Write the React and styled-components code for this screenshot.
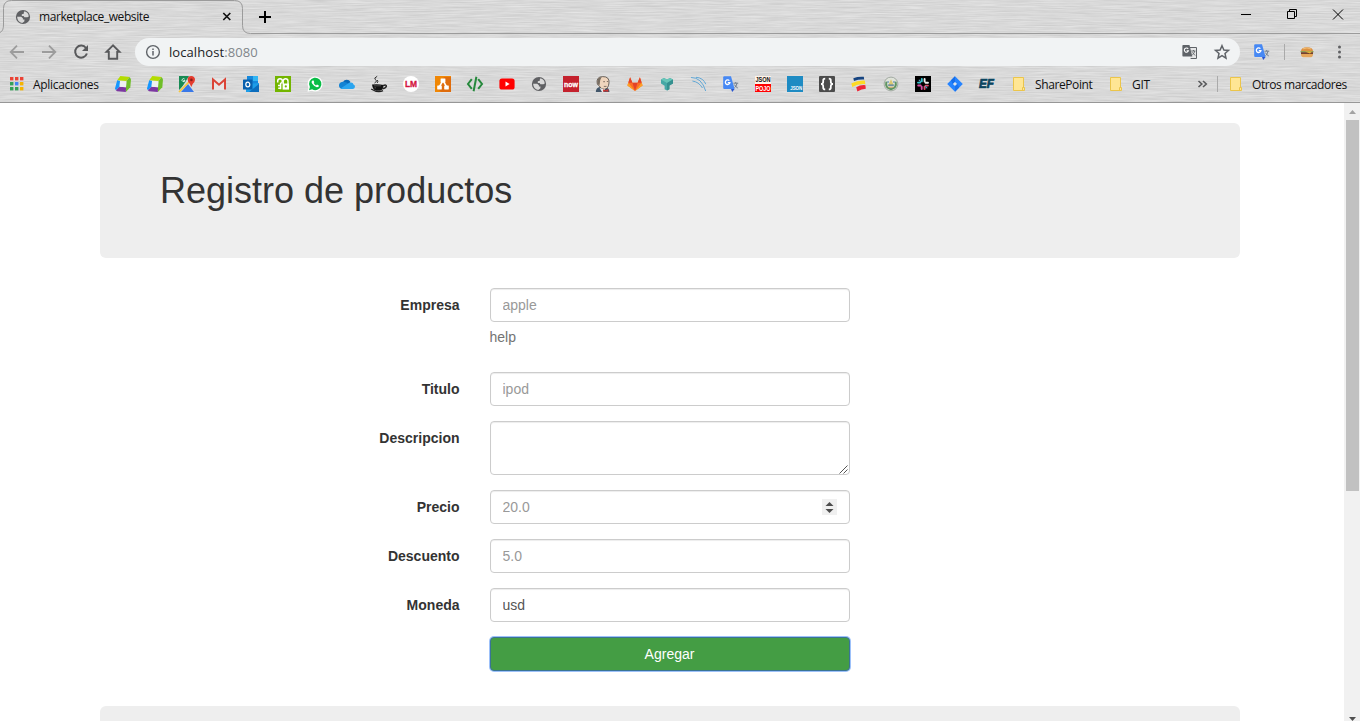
import React from "react";
import styled, { createGlobalStyle } from "styled-components";

const GlobalStyle = createGlobalStyle`
  *, *::before, *::after { box-sizing: border-box; }
  html, body { margin: 0; height: 721px; overflow: hidden; background: #fff; }
  svg { display: block; flex: none; overflow: visible; }
`;

const Window = styled.div`
  display: flex;
  flex-direction: column;
  width: 1360px;
  height: 721px;
  overflow: hidden;
`;

/* Browser chrome */

const Chrome = styled.header`
  position: relative;
  flex: none;
  height: 103px;
  border-bottom: 1px solid #979797;
  background: #d8d8d8;
  font-family: "Open Sans", "Noto Sans", sans-serif;
  font-size: 12px;
  color: #111;
  isolation: isolate;
`;

const Texture = styled.svg`
  position: absolute;
  inset: 0;
  z-index: -1;
`;

const TabOutline = styled.svg`
  position: absolute;
  left: 0;
  top: 0;
  z-index: -1;
`;

const TabStrip = styled.div`
  display: flex;
  align-items: center;
  height: 34px;
  padding: 0 16px 1px 15px;
`;

const TabTitle = styled.span`
  width: 182px;
  margin-left: 8px;
  white-space: nowrap;
  letter-spacing: -0.42px;
`;

const NewTab = styled.svg`
  margin-left: 27px;
`;

const WindowButtons = styled.div`
  display: flex;
  gap: 35px;
  margin-left: auto;
  margin-bottom: 5px;
`;

const Toolbar = styled.div`
  display: flex;
  align-items: center;
  height: 36px;
  padding: 0 11px 0 9px;
`;

const NavButtons = styled.div`
  display: flex;
  gap: 16px;
`;

const AddressBar = styled.div`
  display: flex;
  align-items: center;
  width: 1105px;
  height: 28px;
  margin-left: 14px;
  padding: 0 10px;
  border-radius: 14px;
  background: #f1f3f4;
`;

const Url = styled.span`
  flex: 1;
  margin-left: 8px;
  font-size: 13px;
  letter-spacing: 0.08px;
  color: #202124;
`;

const Port = styled.span`
  color: #80868b;
`;

const AddressActions = styled.div`
  display: flex;
  gap: 16px;
`;

const Extensions = styled.div`
  display: flex;
  align-items: center;
  margin-left: 14px;
`;

const MenuDots = styled.svg`
  margin-left: 16px;
`;

const Separator = styled.span`
  width: 1px;
  height: 16px;
  margin: ${(p) => p.$margin};
  background: #aaa;
`;

const BookmarksBar = styled.nav`
  display: flex;
  align-items: center;
  height: 28px;
  padding: 0 0 0 8px;
`;

const Bookmark = styled.div`
  display: flex;
  align-items: center;
  flex: none;
  gap: ${(p) => p.$gap || "10px"};
  width: ${(p) => p.$width};
  white-space: nowrap;
  letter-spacing: ${(p) => p.$spacing || "-0.3px"};
`;

const Favicons = styled.div`
  display: flex;
  gap: 16px;
  margin-right: 18px;
`;

/* Page */

const Viewport = styled.div`
  display: flex;
  flex: 1;
  min-height: 0;
`;

const Page = styled.main`
  flex: 1;
  padding: 20px 104px 0 100px;
  overflow: hidden;
  background: #fff;
  font-family: "Liberation Sans", Arial, sans-serif;
  font-size: 14px;
  line-height: 20px;
  color: #333;
`;

const Jumbotron = styled.section`
  height: 135px;
  padding: 48px 60px;
  margin-bottom: 30px;
  border-radius: 6px;
  background: #eee;
`;

const Heading = styled.h1`
  margin: 0;
  font-size: 36px;
  font-weight: 400;
  line-height: 40px;
`;

const Form = styled.form`
  display: flex;
  flex-direction: column;
  gap: 15px;
  margin-bottom: 35px;
`;

const FormRow = styled.div`
  display: grid;
  grid-template-columns: 359.5px 360px;
  column-gap: 30.5px;
`;

const Label = styled.label`
  padding-top: 7px;
  text-align: right;
  font-weight: 700;
`;

const Control = styled.div`
  position: relative;
  display: flex;
  align-items: center;
  height: ${(p) => p.$height || "34px"};
  padding: 0 12px 0 11.5px;
  border: 1px solid #ccc;
  border-radius: 4px;
  box-shadow: inset 0 1px 1px rgba(0, 0, 0, 0.075);
  background: #fff;
`;

const Input = styled.input`
  flex: 1;
  min-width: 0;
  height: 20px;
  padding: 0;
  border: 0;
  outline: 0;
  background: transparent;
  font: inherit;
  color: #555;
  &::placeholder { color: #999; opacity: 1; }
`;

const TextArea = styled.textarea`
  flex: 1;
  height: 40px;
  padding: 0;
  border: 0;
  outline: 0;
  resize: none;
  background: transparent;
  font: inherit;
`;

const ResizeGrip = styled.svg`
  position: absolute;
  right: 1px;
  bottom: 0;
`;

const Help = styled.span`
  display: block;
  margin: 5px 0 10px -0.5px;
  color: #737373;
`;

const Submit = styled.button`
  grid-column: 2;
  height: 34px;
  padding: 0 1px 0 0;
  border: 1px solid #3a7495;
  border-radius: 4px;
  outline: 0;
  box-shadow: 0 0 0 1px #9dc1fa;
  background: #449d44;
  font: inherit;
  color: #fff;
`;

const Scrollbar = styled.aside`
  display: flex;
  flex-direction: column;
  align-items: center;
  width: 16px;
  padding: 7px 0 0 1px;
  background: #f1f1f1;
`;

const Thumb = styled.div`
  width: 13px;
  height: 371px;
  margin: 6px 0 226px;
  background: #c1c1c1;
`;

/* Icons */

const Icon = ({ children }) => (
  <svg width="16" height="16" viewBox="0 0 16 16">{children}</svg>
);

const Globe = () => (
  <Icon>
    <circle cx="8" cy="8" r="7.1" fill="#5f6063" />
    <path d="M9.4 2.3Q13.4 3.2 13.8 7.4L12.4 8.2H9.4L8.6 7.1L6.8 6.9V5.2L8.8 4.7V3.4Z" fill="#d9d9d9" />
    <path d="M2.1 7.7H6.2L7.9 9.2V10.6H9.5L9.3 12.6L7.2 13.9Q2.4 13 2.1 7.7Z" fill="#d9d9d9" />
  </Icon>
);

const Cube = () => (
  <Icon>
    <path d="M5.4 0L14.8 1L11.3 4.9L2.2 4.2Z" fill="#b4dc00" />
    <path d="M14.8 1L16 3.4L15.3 11.2L10.8 15.9L11.4 4.9Z" fill="#6fbe28" />
    <path d="M2.2 4.2L5 5L4.6 10.8L.9 14.2L0 12.5Z" fill="#1496ff" />
    <path d="M.9 14.2L4.6 10.7L11.1 11.2L10.8 16L2 15.3Z" fill="#7c38a1" />
    <path d="M5 4.9L11.4 5.2L11 11.2L4.6 10.8Z" fill="#edf1f1" />
  </Icon>
);

const Maps = () => (
  <Icon>
    <path d="M0 0H10L5 8L0 16Z" fill="#188b54" />
    <path d="M0 14L9 5L15 11V15H0Z" fill="#d8dcde" />
    <path d="M2 16L9 8L15 16Z" fill="#3978e8" />
    <path d="M0 16L12 4" stroke="#f6c63b" strokeWidth="1.7" />
    <path d="M12.2 0A3.6 3.6 0 0 1 16 3.8Q16 6 13.7 8.1L12.3 11L10.9 8Q8.7 6.2 8.7 3.8A3.6 3.6 0 0 1 12.2 0Z" fill="#e53c2e" />
    <circle cx="12.4" cy="3.9" r="1.3" fill="#871e1a" />
    <path d="M5.6 3.1A1.5 1.5 0 1 0 6 4.6H4.4" fill="none" stroke="#e7f6ec" />
  </Icon>
);

const Gmail = () => (
  <Icon>
    <path d="M2 3H14V14H2Z" fill="#e8e5e5" />
    <path d="M2 13.5V3.5L8 8.7L14 3.5V13.5" fill="none" stroke="#db4437" strokeWidth="2" />
  </Icon>
);

const Outlook = () => (
  <Icon>
    <path d="M4 0H15V10H4Z" fill="#1688dc" />
    <path d="M10 0H15V5H10Z" fill="#32b5f3" />
    <path d="M3 8L16 7V16H3Z" fill="#1d9de8" />
    <path d="M6 16L16 8V16Z" fill="#0c6dbd" />
    <rect y="3.5" width="9.5" height="10" rx=".6" fill="#0860ae" />
    <ellipse cx="4.8" cy="8.5" rx="2" ry="2.4" fill="none" stroke="#fff" strokeWidth="1.2" />
  </Icon>
);

const GreenKeys = () => (
  <Icon>
    <path d="M0 0H16V16H0Z" fill="#73b500" />
    <path d="M2.7 6.4V5Q2.7 2.7 5 2.7Q7.4 2.7 7.4 5Q7.2 7 5.6 7.4V13.3M3 9.4H5.6M3.2 12.3H5.6" fill="none" stroke="#fff" strokeWidth="1.5" />
    <path d="M8.2 8V5Q8.4 2.8 10.6 2.8Q13 2.8 13 5.2V8" fill="none" stroke="#fff" strokeWidth="1.4" />
    <path d="M7.6 7.5H14V13.6H7.6Z" fill="#fff" />
    <circle cx="10.8" cy="10.4" r="1.1" fill="#73b500" />
  </Icon>
);

const WhatsApp = () => (
  <Icon>
    <circle cx="8.1" cy="7.9" r="7.5" fill="#fff" />
    <path d="M.5 15.7L1.8 10.6L5.8 14.5Z" fill="#fff" />
    <path d="M2 14.2L2.9 11.1A6.2 6.2 0 1 1 5.1 13.3Z" fill="#08bd46" />
    <path d="M5.5 4.4Q3.7 5.5 5.5 8.1Q8 11.9 10.9 11.1Q12.3 10.5 11.8 9.4L10 8.5L9 9.4Q7.5 8.8 6.7 7.1L7.3 6.3L6.6 4.4Z" fill="#fff" />
  </Icon>
);

const OneDrive = () => (
  <Icon>
    <path d="M4 6A4.2 4.2 0 0 1 11.5 6L8 10Z" fill="#0868b8" />
    <path d="M3.7 5.8Q0 6.2 0 9.6Q0 12.5 3 13L10 9Q8 5.8 3.7 5.8Z" fill="#1383d4" />
    <path d="M10.2 6.7Q14 5.6 14.5 8.5Q16 9 16 10.7Q15.7 13 13.6 13H3L1.6 12.5Z" fill="#2ba5ef" />
  </Icon>
);

const Coffee = () => (
  <Icon>
    <path d="M1 8.5Q7 7.6 12.5 9Q12.3 14 8.9 14.8H5Q1.7 14 1 8.5Z" fill="#111" />
    <path d="M12 9.6Q15.5 8.3 15.4 10.1Q15.2 12 11.3 12.7M.2 13Q7 17.3 12 14.6" fill="none" stroke="#222" strokeWidth="1.4" />
    <path d="M3.5 7Q7 5 4.3 3.6Q2.4 2 6.2 .3M6.2 7Q7.4 5.3 6.4 4" fill="none" stroke="#333" />
    <path d="M3 9.8H10M3.5 11.8H5" stroke="#777" strokeWidth=".6" />
  </Icon>
);

const IconText = styled.text`
  font-family: "Liberation Sans", Arial, sans-serif;
  font-weight: 700;
  font-size: ${(p) => p.$size}px;
  font-style: ${(p) => (p.$italic ? "italic" : "normal")};
`;

const LM = () => (
  <Icon>
    <circle cx="8" cy="8" r="8" fill="#fff" />
    <IconText x="1.9" y="11.2" $size="9" fill="#d3133f" stroke="#d3133f" strokeWidth=".3" textLength="12.2" lengthAdjust="spacingAndGlyphs">LM</IconText>
  </Icon>
);

const DrawIo = () => (
  <Icon>
    <path d="M0 0H16V16H0Z" fill="#f08705" />
    <path d="M9 1H16V16H6L3 13Z" fill="#df6c0c" />
    <path d="M7.7 5L4.5 10.7M8.3 5L11.5 10.7" stroke="#fff" strokeWidth="1.6" />
    <rect x="5.6" y="2.4" width="4.8" height="4" rx=".4" fill="#fff" />
    <rect x="2.2" y="9.5" width="4.6" height="4" rx=".4" fill="#fff" />
    <rect x="9.2" y="9.5" width="4.6" height="4" rx=".4" fill="#fff" />
  </Icon>
);

const CodeTag = () => (
  <Icon>
    <path d="M4.8 3.2L1 8L4.8 12.8M11.2 3.2L15 8L11.2 12.8M9.4 .8L6.6 15.3" fill="none" stroke="#26893c" strokeWidth="2" />
  </Icon>
);

const YouTube = () => (
  <Icon>
    <rect x=".4" y="2.4" width="15.2" height="11.2" rx="2.6" fill="#f00" />
    <path d="M6.5 5.6V10.4L10.6 8Z" fill="#fff" />
  </Icon>
);

const Now = () => (
  <Icon>
    <path d="M0 0H16V16H0Z" fill="#c4212d" />
    <IconText x="1" y="10.5" $size="8" fill="#fff" stroke="#fff" strokeWidth=".3" textLength="14" lengthAdjust="spacingAndGlyphs">now</IconText>
  </Icon>
);

const Jenkins = () => (
  <Icon>
    <path d="M.8 16Q1 11.5 5 11L13 12.3Q14.5 14 14.5 16Z" fill="#42566a" />
    <path d="M2.3 8Q.8 .8 7.7 .6Q14.6 .5 14 7Q13.3 13.2 9.3 13.3Q5.3 13 4.3 10Z" fill="#efd5bd" stroke="#4a443f" strokeWidth=".8" />
    <path d="M2.6 8.4Q.8 1.8 6.6 1L5.2 4.3L4.6 9Z" fill="#776d62" />
    <path d="M8.2 5.7H10M11.8 5.5H13M8.8 10.4H11.5" stroke="#6b5a50" strokeWidth=".8" />
    <path d="M4.6 12L7 16H8.6L10 13.3Z" fill="#e8e8e8" />
    <path d="M8 13.2L10.6 14.2L13.3 13V16L10.6 15.2L8.2 16Z" fill="#c83532" />
  </Icon>
);

const GitLab = () => (
  <Icon>
    <path d="M8 15L.4 9.4L3.1 1.2L5.4 6.8H10.6L12.9 1.2L15.6 9.4Z" fill="#fc6d26" />
    <path d="M3.1 1.2L5.4 6.8H1.3ZM12.9 1.2L10.6 6.8H14.7ZM5.4 6.8H10.6L8 15Z" fill="#e24329" />
    <path d="M1.3 6.8L.4 9.4L8 15ZM14.7 6.8L15.6 9.4L8 15Z" fill="#fca326" />
  </Icon>
);

const TealY = () => (
  <Icon>
    <path d="M2 3.6L5 2L8 3.4L11 2L14 3.6V7.6L10.4 9.6V13.2L8 14.6L5.6 13.2V9.8L2 7.6Z" fill="#45a8a6" />
    <path d="M2 3.6L5 2L8 3.4L11 2L14 3.6L8 7Z" fill="#67c5b8" />
    <path d="M8 7L14 3.6V7.6L10.4 9.6V13.2L8 14.6Z" fill="#35908f" />
  </Icon>
);

const BlueArcs = () => (
  <Icon>
    <path d="M0 1.5Q10.5 1.3 14.7 15M1.4 5Q7.7 5.8 11.5 12M5 1.3Q12.3 1.8 14.8 8.2" fill="none" stroke="#54a2d5" strokeWidth=".9" />
  </Icon>
);

const Translate = () => (
  <Icon>
    <path d="M8 4H15.6V14H10Z" fill="#d2d5d9" />
    <path d="M1.2 .2H8L11.6 13H1.2Q.2 13 .2 12V1.2Q.2 .2 1.2 .2Z" fill="#4688f4" />
    <path d="M8 13H11.6L9.2 15.9Z" fill="#2855d0" />
    <path d="M6.4 4.7A2.3 2.3 0 1 0 6.9 6.7H4.8" fill="none" stroke="#fff" strokeWidth="1.3" />
    <path d="M10.4 7.2H15.2M12.7 6V7.2M14 7.2Q13.4 10.4 11.6 11.6M11.4 8.6Q12.6 10.9 14.8 12" fill="none" stroke="#74808e" />
  </Icon>
);

const JsonPojo = () => (
  <Icon>
    <path d="M0 0H16V8H0Z" fill="#fff3e8" />
    <path d="M0 8H16V16H0Z" fill="#f00" />
    <IconText x=".4" y="6" $size="7.2" fill="#111" textLength="15.2" lengthAdjust="spacingAndGlyphs">JSON</IconText>
    <IconText x=".4" y="14.6" $size="7.2" fill="#fff" textLength="15.2" lengthAdjust="spacingAndGlyphs">POJO</IconText>
  </Icon>
);

const JsonBlue = () => (
  <Icon>
    <path d="M0 0H16V16H0Z" fill="#1e8bc3" />
    <IconText x="3.2" y="14" $size="5.4" fill="#fff" textLength="12" lengthAdjust="spacingAndGlyphs">JSON</IconText>
  </Icon>
);

const Braces = () => (
  <Icon>
    <rect width="16" height="16" rx="1" fill="#4b4b4b" />
    <path d="M6.2 2.6Q4 2.6 4.2 5Q4.4 8 2 8Q4.4 8 4.2 11Q4 13.4 6.2 13.4M9.8 2.6Q12 2.6 11.8 5Q11.6 8 14 8Q11.6 8 11.8 11Q12 13.4 9.8 13.4" fill="none" stroke="#fff" strokeWidth="1.8" />
  </Icon>
);

const Stripes = () => (
  <Icon>
    <path d="M2.3 2.2Q7 .4 12.8 .8L13.2 3.6Q8 3.2 3 5Z" fill="#164481" />
    <path d="M.4 7.2Q7 4.2 13.8 4.6L14.4 8.2Q7 7.6 1.2 11Z" fill="#fdda24" />
    <path d="M5.2 11.3Q9.4 8.7 14.4 9.2L14.8 12.8Q10.5 13 6.4 15.4Z" fill="#ee2537" />
  </Icon>
);

const Seal = () => (
  <Icon>
    <circle cx="8" cy="8" r="6.9" fill="#dfe3da" stroke="#a2aaa2" />
    <path d="M3.4 5.6Q1.9 12.3 8 13.2Q14.1 12.3 12.6 5.6" fill="none" stroke="#5f9462" strokeWidth="2" />
    <path d="M8 3.2L11 9.8H5Z" fill="#dcc870" />
    <path d="M4.2 6H6M10 6H11.8M5.2 9.2H10.8" stroke="#4a7cae" strokeWidth="1.2" />
    <path d="M5.5 11.2H10.5" stroke="#c79f51" />
  </Icon>
);

const Burst = () => (
  <Icon>
    <path d="M0 0H16V16H0Z" fill="#000" />
    <g strokeWidth="1.9" strokeLinecap="round">
      <path d="M6.8 3V5.4M3 6.6H5.2" stroke="#36c5d0" />
      <path d="M9.6 3V5.6M13 6.7H10.6" stroke="#eee" />
      <path d="M3.2 9.5H5.6M6.7 13V10.8" stroke="#d84fa5" />
      <path d="M9.6 13V10.6M12.9 9.6H10.7" stroke="#e14a69" />
      <path d="M4.2 4.2L5.6 5.6M11.8 11.8L10.5 10.5" stroke="#4e9cc0" strokeWidth="1.2" />
    </g>
  </Icon>
);

const Jira = () => (
  <Icon>
    <path d="M8 .2L15.8 8L8 15.8L.2 8Z" fill="#2684ff" />
    <path d="M8 5.6V.2L4 4.2L5.7 8Z" fill="#176ee9" />
    <path d="M8 5.9L10.1 8L8 10.1L5.9 8Z" fill="#dfe5ec" />
    <path d="M8 10.3V15.8L12.2 11.5L10.3 8Z" fill="#1b73ee" />
  </Icon>
);

const EF = () => (
  <Icon>
    <IconText x="0" y="12.2" $size="12.2" $italic fill="#0b455f" stroke="#0b455f" strokeWidth=".7" textLength="15" lengthAdjust="spacingAndGlyphs">EF</IconText>
  </Icon>
);

const Folder = () => (
  <svg width="12" height="14" viewBox="0 0 12 14">
    <path d="M.5 .5H10.5V10.5H11.5V13.5H.5Z" fill="#ffe694" stroke="#ebc54b" />
    <path d="M9.5 13V10.5H11" fill="none" stroke="#ebc54b" />
  </svg>
);

const AppsGrid = () => (
  <Icon>
    {["#ea4335", "#ea4335", "#ea4335", "#34a058", "#4285f4", "#f5b400", "#34a058", "#34a058", "#f5b400"].map((c, i) => (
      <rect key={i} x={2 + (i % 3) * 5} y={1 + Math.floor(i / 3) * 5} width="3.4" height="3.4" fill={c} />
    ))}
  </Icon>
);

const Burger = () => (
  <Icon>
    <path d="M2 7Q2 3.2 8 3.2Q14 3.2 14 7Z" fill="#dc9142" />
    <path d="M4 4.8Q8 3 12 5" fill="none" stroke="#f2bd73" />
    <path d="M1.5 7H14.5V8.3H1.5Z" fill="#8c9d52" />
    <path d="M2 8.2H14V10.3H2Z" fill="#75402b" />
    <path d="M6 7.6H13L11 9.4Z" fill="#e9b637" />
    <path d="M2 10.1H14Q14 13.2 11.8 13.2H4.2Q2 13.2 2 10.1Z" fill="#e5a65b" />
  </Icon>
);

const PageTranslate = () => (
  <Icon>
    <path d="M7 3.5H14.5V14.5H8.6" fill="#e6e7e8" stroke="#5f6368" />
    <path d="M1 1H7.5L10.3 12.5H1Q.4 12.5 .4 11.5V2Q.4 1 1 1Z" fill="#5f6368" />
    <path d="M6.2 4.9A2.1 2.1 0 1 0 6.5 6.7H4.6" fill="none" stroke="#fff" strokeWidth="1.1" />
    <path d="M9.2 7H13.4M11.5 6V7M12.8 7Q12 10 10.3 10.8M10.4 8.4L13.1 11.5" fill="none" stroke="#5f6368" strokeWidth=".9" />
  </Icon>
);

const favicons = [Cube, Cube, Maps, Gmail, Outlook, GreenKeys, WhatsApp, OneDrive, Coffee, LM, DrawIo, CodeTag, YouTube, Globe, Now, Jenkins, GitLab, TealY, BlueArcs, Translate, JsonPojo, JsonBlue, Braces, Stripes, Seal, Burst, Jira, EF];

const BrowserChrome = () => (
  <Chrome>
    <Texture width="1360" height="102">
      <filter id="brushed" x="0" y="0" width="100%" height="100%" colorInterpolationFilters="sRGB">
        <feTurbulence type="fractalNoise" baseFrequency="0.03 0.8" numOctaves="3" seed="7" />
        <feColorMatrix values="0.13 0 0 0 0.785  0.13 0 0 0 0.785  0.13 0 0 0 0.785  0 0 0 0 1" />
      </filter>
      <rect width="1360" height="102" fill="#d8d8d8" filter="url(#brushed)" />
    </Texture>
    <TabOutline width="1360" height="34">
      <path d="M0 32.5Q3.5 31 3.5 25V8.5Q3.5 .5 11.5 .5H234.5Q242.5 .5 242.5 8.5V25.5Q242.5 33.5 250.5 33.5H1360" fill="none" stroke="#9b9b9b" />
    </TabOutline>
    <TabStrip>
      <Globe />
      <TabTitle>marketplace_website</TabTitle>
      <svg width="11" height="11" viewBox="0 0 11 11"><path d="M2.3 2L9.3 9M9.3 2L2.3 9" stroke="#111" strokeWidth="1.7" /></svg>
      <NewTab width="12" height="12" viewBox="0 0 12 12"><path d="M6 0V12M0 6H12" stroke="#000" strokeWidth="2" /></NewTab>
      <WindowButtons>
        <svg width="11" height="11"><path d="M0 5.5H10" stroke="#000" /></svg>
        <svg width="11" height="11"><path d="M.5 2.5H7.5V9.5H.5ZM2.5 2.5V.5H9.5V7.5H7.5" fill="none" stroke="#000" /></svg>
        <svg width="11" height="11"><path d="M0 .5L10 10.5M10 .5L0 10.5" stroke="#000" /></svg>
      </WindowButtons>
    </TabStrip>
    <Toolbar>
      <NavButtons>
        <Icon><path d="M15 8H2M8 1.7L1.7 8L8 14.3" fill="none" stroke="#9c9c9c" strokeWidth="1.8" /></Icon>
        <Icon><path d="M1 8H14M8 1.7L14.3 8L8 14.3" fill="none" stroke="#9c9c9c" strokeWidth="1.8" /></Icon>
        <Icon><path d="M13 4A6 6 0 1 0 13.9 9.5" fill="none" stroke="#58595b" strokeWidth="2" /><path d="M15 1V7H9Z" fill="#58595b" /></Icon>
        <Icon><path d="M8 1.4L1.5 7.9H3.8V14.8H12.2V7.9H14.5Z" fill="none" stroke="#58595b" strokeWidth="1.9" /></Icon>
      </NavButtons>
      <AddressBar>
        <Icon><circle cx="8" cy="8" r="6.4" fill="none" stroke="#5f6368" strokeWidth="1.4" /><path d="M8 7V11.6M8 4.4V6" stroke="#5f6368" strokeWidth="1.5" /></Icon>
        <Url>localhost<Port>:8080</Port></Url>
        <AddressActions>
          <PageTranslate />
          <Icon><path d="M8 1.7L9.9 6L14.5 6.4L11 9.5L12 14.1L8 11.7L4 14.1L5 9.5L1.5 6.4L6.1 6Z" fill="none" stroke="#5f6368" strokeWidth="1.5" /></Icon>
        </AddressActions>
      </AddressBar>
      <Extensions>
        <Translate />
        <Separator $margin="0 14px" />
        <Burger />
        <MenuDots width="16" height="16"><circle cx="8.5" cy="3" r="1.5" fill="#5f6063" /><circle cx="8.5" cy="8" r="1.5" fill="#5f6063" /><circle cx="8.5" cy="13" r="1.5" fill="#5f6063" /></MenuDots>
      </Extensions>
    </Toolbar>
    <BookmarksBar>
      <Bookmark $width="107px" $gap="9px"><AppsGrid />Aplicaciones</Bookmark>
      <Favicons>{favicons.map((Favicon, i) => <Favicon key={i} />)}</Favicons>
      <Bookmark $width="97px" $spacing="-0.4px"><Folder />SharePoint</Bookmark>
      <Bookmark $width="88px"><Folder />GIT</Bookmark>
      <svg width="9" height="8"><path d="M.5 1L3.8 4L.5 7M5 1L8.3 4L5 7" fill="none" stroke="#58595b" strokeWidth="1.6" /></svg>
      <Separator $margin="0 12px 0 10px" />
      <Bookmark $width="130px" $spacing="-0.42px"><Folder />Otros marcadores</Bookmark>
    </BookmarksBar>
  </Chrome>
);

const TextField = ({ label, placeholder, value, help, children }) => (
  <FormRow>
    <Label>{label}</Label>
    <div>
      <Control>
        <Input placeholder={placeholder} defaultValue={value} />
        {children}
      </Control>
      {help && <Help>{help}</Help>}
    </div>
  </FormRow>
);

const ProductForm = () => (
  <Form>
    <TextField label="Empresa" placeholder="apple" help="help" />
    <TextField label="Titulo" placeholder="ipod" />
    <FormRow>
      <Label>Descripcion</Label>
      <Control $height="54px">
        <TextArea />
        <ResizeGrip width="9" height="9"><path d="M.5 8.5L8.5 .5M4.5 8.5L8.5 4.5" stroke="#555" /></ResizeGrip>
      </Control>
    </FormRow>
    <TextField label="Precio" placeholder="20.0">
      <svg width="15" height="16" viewBox="0 0 15 16"><path d="M0 0H15V16H0Z" fill="#f0f0f0" /><path d="M3.5 7L7.5 3L11.5 7ZM3.5 10L7.5 14L11.5 10Z" fill="#4d4d4d" /></svg>
    </TextField>
    <TextField label="Descuento" placeholder="5.0" />
    <TextField label="Moneda" value="usd" />
    <FormRow><Submit type="button">Agregar</Submit></FormRow>
  </Form>
);

export default function App() {
  return (
    <Window>
      <GlobalStyle />
      <BrowserChrome />
      <Viewport>
        <Page>
          <Jumbotron><Heading>Registro de productos</Heading></Jumbotron>
          <ProductForm />
          <Jumbotron />
        </Page>
        <Scrollbar>
          <svg width="7" height="4"><path d="M0 4L3.5 0L7 4Z" fill="#a3a3a3" /></svg>
          <Thumb />
          <svg width="7" height="4"><path d="M0 0L3.5 4L7 0Z" fill="#505050" /></svg>
        </Scrollbar>
      </Viewport>
    </Window>
  );
}
